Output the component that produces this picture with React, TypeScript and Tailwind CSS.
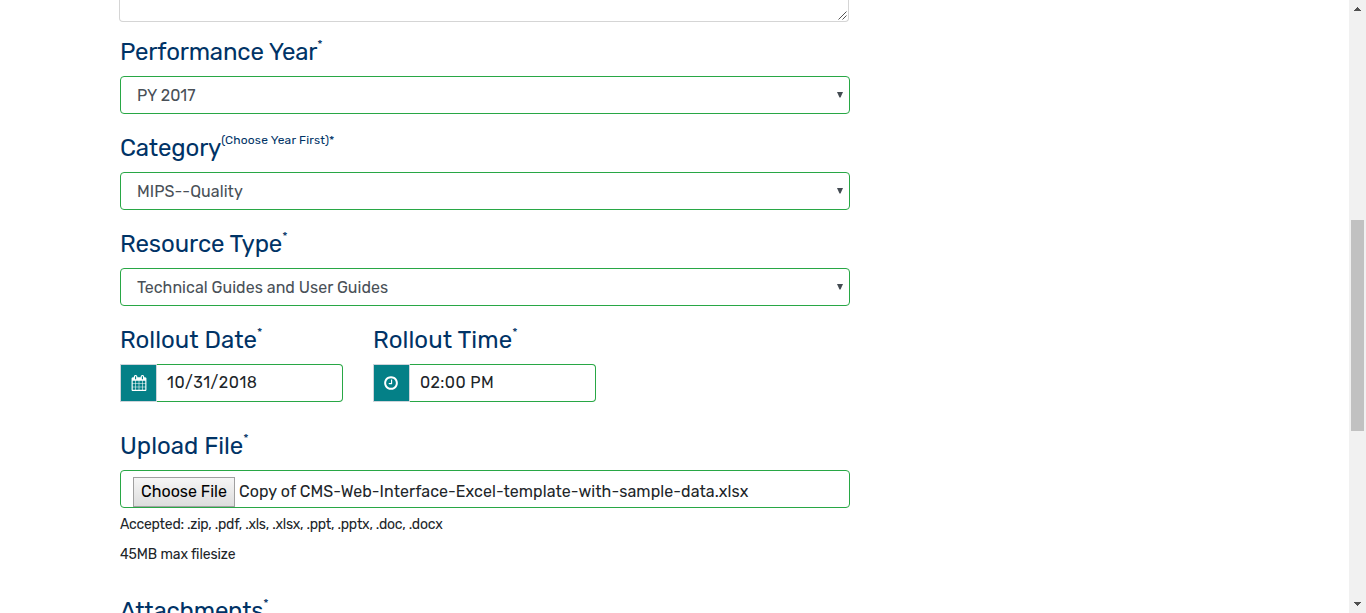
import React from "react";

type LabelProps = { text: string; tracking: string; note?: string; noteClass?: string };

function FieldLabel({ text, tracking, note = "*", noteClass = "" }: LabelProps) {
  return (
    <div className="flex h-[39px] items-start whitespace-nowrap text-[#003366]">
      <span className={`pt-px text-2xl leading-[29px] ${tracking}`}>{text}</span>
      <sup className={`top-0 text-xs leading-[15px] ${noteClass}`}>{note}</sup>
    </div>
  );
}

function SelectField({ value, tracking }: { value: string; tracking: string }) {
  return (
    <div className="flex h-[38px] items-center justify-between rounded border border-[#28a745] pr-[6px] pl-4 text-[#495057]">
      <span className={`pt-[2px] text-base leading-6 ${tracking}`}>{value}</span>
      <svg width="6" height="6" viewBox="0 0 6 6" fill="#444b52">
        <path d="M0 0h6L3.5 5.5h-1z" />
      </svg>
    </div>
  );
}

function CalendarIcon() {
  return (
    <svg width="16" height="16" viewBox="0 0 1792 1792" fill="white">
      <path d="M192 1664h288v-288h-288v288zm352 0h320v-288h-320v288zm-352-352h288v-320h-288v320zm352 0h320v-320h-320v320zm-352-384h288v-288h-288v288zm736 736h320v-288h-320v288zm-384-736h320v-288h-320v288zm768 736h288v-288h-288v288zm-384-352h320v-320h-320v320zm-352-864v-288q0-13-9.5-22.5t-22.5-9.5h-64q-13 0-22.5 9.5t-9.5 22.5v288q0 13 9.5 22.5t22.5 9.5h64q13 0 22.5-9.5t9.5-22.5zm736 864h288v-320h-288v320zm-384-384h320v-288h-320v288zm384 0h288v-288h-288v288zm32-480v-288q0-13-9.5-22.5t-22.5-9.5h-64q-13 0-22.5 9.5t-9.5 22.5v288q0 13 9.5 22.5t22.5 9.5h64q13 0 22.5-9.5t9.5-22.5zm384-64v1280q0 52-38 90t-90 38h-1408q-52 0-90-38t-38-90v-1280q0-52 38-90t90-38h128v-96q0-66 47-113t113-47h64q66 0 113 47t47 113v96h384v-96q0-66 47-113t113-47h64q66 0 113 47t47 113v96h128q52 0 90 38t38 90z" />
    </svg>
  );
}

function ClockIcon() {
  return (
    <svg width="16" height="16" viewBox="0 0 1792 1792" fill="white">
      <path d="M1024 544v448q0 14-9 23t-23 9h-320q-14 0-23-9t-9-23v-64q0-14 9-23t23-9h224v-352q0-14 9-23t23-9h64q14 0 23 9t9 23zm416 352q0-148-73-273t-198-198-273-73-273 73-198 198-73 273 73 273 198 198 273 73 273-73 198-198 73-273zm224 0q0 209-103 385.5t-279.5 279.5-385.5 103-385.5-103-279.5-279.5-103-385.5 103-385.5 279.5-279.5 385.5-103 385.5 103 279.5 279.5 103 385.5z" />
    </svg>
  );
}

type AddonProps = { icon: React.ReactNode; iconPad: string; value: string; tracking: string };

function AddonField({ icon, iconPad, value, tracking }: AddonProps) {
  return (
    <div className="flex h-[38px] w-[223px]">
      <div className={`flex w-[37px] items-center border border-[#ced4da] bg-[#048087] ${iconPad}`}>{icon}</div>
      <div className="flex flex-1 items-center rounded-r border border-l-0 border-[#28a745] pl-[10px] text-[#212529]">
        <span className={`text-base leading-6 whitespace-nowrap ${tracking}`}>{value}</span>
      </div>
    </div>
  );
}

function ScrollBar() {
  return (
    <div className="flex w-[17px] shrink-0 flex-col items-center bg-[#f1f1f1]">
      <svg className="mt-[7px] h-[4px]" width="7" height="4" viewBox="0 0 7 4" fill="#505050" shapeRendering="crispEdges">
        <path d="M3 0h1v1h1v1h1v1h1v1H0V3h1V2h1V1h1z" />
      </svg>
      <div className="mt-[209px] h-[211px] w-[13px] bg-[#c1c1c1]" />
      <svg className="mt-auto mb-[7px]" width="7" height="4" viewBox="0 0 7 4" fill="#505050" shapeRendering="crispEdges">
        <path d="M0 0h7v1H6v1H5v1H4v1H3V3H2V2H1V1H0z" />
      </svg>
    </div>
  );
}

export default function App() {
  return (
    <div className="flex h-[613px] w-[1366px] overflow-hidden bg-white font-['Rubik','Roboto',sans-serif] font-normal">
      <main className="flex-1 overflow-hidden pl-[120px]">
        <div className="w-[730px]">
          <div className="mr-px -ml-px flex h-[22px] items-end justify-end rounded-b border border-t-0 border-[#d5d5d5]">
            <svg width="10" height="10" viewBox="0 0 10 10" stroke="#555" strokeWidth="1" fill="none">
              <path d="M0.5 8.5l8-8M4.5 8.5l4-4" />
            </svg>
          </div>

          <div className="mt-[15px]">
            <FieldLabel text="Performance Year" tracking="tracking-[-0.17px]" />
            <SelectField value="PY 2017" tracking="tracking-[0px]" />
          </div>
          <div className="mt-[19px]">
            <FieldLabel text="Category" tracking="tracking-[-0.15px]" note="(Choose Year First)*" noteClass="tracking-[0.17px]" />
            <SelectField value="MIPS--Quality" tracking="tracking-[0.08px]" />
          </div>
          <div className="mt-[19px]">
            <FieldLabel text="Resource Type" tracking="tracking-[-0.08px]" />
            <SelectField value="Technical Guides and User Guides" tracking="tracking-[0.03px]" />
          </div>
          <div className="mt-[19px] flex gap-[30px]">
            <div className="w-[223px]">
              <FieldLabel text="Rollout Date" tracking="tracking-[0px]" />
              <AddonField icon={<CalendarIcon />} iconPad="pl-[10px]" value="10/31/2018" tracking="tracking-[0.6px]" />
            </div>
            <div className="w-[223px]">
              <FieldLabel text="Rollout Time" tracking="tracking-[0.07px]" />
              <AddonField icon={<ClockIcon />} iconPad="pl-[9px]" value="02:00 PM" tracking="tracking-[0.4px]" />
            </div>
          </div>
          <div className="mt-[29px]">
            <FieldLabel text="Upload File" tracking="tracking-[0px]" />
            <div className="flex h-[38px] items-end rounded border border-[#28a745] pl-3 whitespace-nowrap">
              <button className="h-[30px] w-[102px] border border-[#a0a0a0] bg-linear-to-b from-[#f6f6f6] to-[#dddddd] text-base leading-7 tracking-[0px] text-black">
                Choose File
              </button>
              <span className="ml-1 text-base leading-[30px] tracking-[0.07px] text-[#212529]">
                Copy of CMS-Web-Interface-Excel-template-with-sample-data.xlsx
              </span>
            </div>
            <p className="mt-[7px] text-sm leading-5 text-[#212529]">
              <span className="tracking-[-0.25px]">Accepted: .zip, .pdf, .xls, .xlsx, .ppt, .pptx, .doc, .docx</span>
            </p>
            <p className="mt-[10px] text-sm leading-5 text-[#212529]">
              <span className="tracking-[-0.1px]">45MB max filesize</span>
            </p>
          </div>
          <div className="mt-[31px]">
            <FieldLabel text="Attachments" tracking="tracking-[-0.25px]" />
          </div>
        </div>
      </main>
      <ScrollBar />
    </div>
  );
}
